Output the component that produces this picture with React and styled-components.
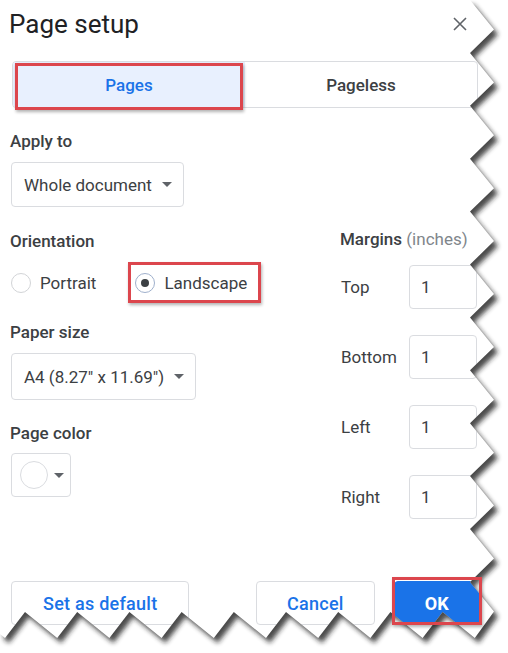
import React from 'react';
import styled, { createGlobalStyle, css } from 'styled-components';

const GlobalStyle = createGlobalStyle`
  body {
    margin: 0;
    background: #ffffff;
  }
`;

// builds the torn-paper outline along the right and bottom edges
const buildPaper = () => {
    const pts = [[0, 0]];
    for (let k = 0; k < 12; k++) {
        const y = k * 52.9;
        pts.push([470, y]);
        pts.push([494, y + 29.5]);
    }
    for (let i = 9; i >= 0; i--) {
        const px = 25 + 52.2 * i;
        if (i < 9) pts.push([px, 612]);
        pts.push([px - 20, 638]);
    }
    pts.push([0, 634]);
    return 'M' + pts.map(p => p.map(n => n.toFixed(1)).join(' ')).join('L') + 'Z';
};

const paper = buildPaper();
const outside = `M0 0H508V653H0Z ${paper}`;

const Caret = () => <CaretShape />;

const App = () => {
    return (
        <>
            <GlobalStyle />
            <Dialog>
                <Header>
                    <Title>Page setup</Title>
                    <Close>
                        <svg width="14" height="14" viewBox="0 0 14 14">
                            <path d="M1 1L13 13M13 1L1 13" stroke="#5f6368" strokeWidth="1.6" fill="none" />
                        </svg>
                    </Close>
                </Header>

                <Tabs>
                    <Tab $active>Pages</Tab>
                    <Tab>Pageless</Tab>
                </Tabs>

                <Body>
                    <Column>
                        <FieldLabel>Apply to</FieldLabel>
                        <Select $h={45}>
                            Whole document
                            <Caret />
                        </Select>

                        <FieldLabel $top={24}>Orientation</FieldLabel>
                        <RadioRow>
                            <RadioOption>
                                <Radio />
                                Portrait
                            </RadioOption>
                            <RadioOption $marked>
                                <Radio $checked />
                                Landscape
                            </RadioOption>
                        </RadioRow>

                        <FieldLabel $top={19}>Paper size</FieldLabel>
                        <Select $h={47}>
                            A4 (8.27" x 11.69")
                            <Caret />
                        </Select>

                        <FieldLabel $top={23}>Page color</FieldLabel>
                        <ColorSelect>
                            <Swatch />
                            <Caret />
                        </ColorSelect>
                    </Column>

                    <MarginsColumn>
                        <FieldLabel>Margins <Hint>(inches)</Hint></FieldLabel>
                        <MarginList>
                            {['Top', 'Bottom', 'Left', 'Right'].map(side => (
                                <MarginRow key={side}>
                                    <SideLabel>{side}</SideLabel>
                                    <NumberBox>1</NumberBox>
                                </MarginRow>
                            ))}
                        </MarginList>
                    </MarginsColumn>
                </Body>

                <Footer>
                    <Button $pad={31}>Set as default</Button>
                    <Actions>
                        <Button $pad={30}>Cancel</Button>
                        <Button $primary $marked>OK</Button>
                    </Actions>
                </Footer>

                <TornEdge width="508" height="653" viewBox="0 0 508 653">
                    <defs>
                        <filter id="tear-blur" x="-10%" y="-10%" width="120%" height="120%">
                            <feGaussianBlur stdDeviation="2.6" />
                        </filter>
                        <clipPath id="tear-outside">
                            <path d={outside} clipRule="evenodd" />
                        </clipPath>
                    </defs>
                    <path d={outside} fill="#ffffff" fillRule="evenodd" />
                    <g clipPath="url(#tear-outside)">
                        <path d={paper} transform="translate(4 5)" fill="#1a1a1a" opacity="0.8" filter="url(#tear-blur)" />
                    </g>
                </TornEdge>
            </Dialog>
        </>
    );
};

const redBox = (inset) => css`
  position: relative;

  &::after {
    content: '';
    position: absolute;
    inset: ${inset};
    border: 3px solid #dc464d;
    box-shadow: 1px 2px 3px rgba(0, 0, 0, 0.3);
    pointer-events: none;
    z-index: 2;
  }
`;

const Dialog = styled.div`
  position: relative;
  width: 508px;
  height: 653px;
  box-sizing: border-box;
  padding: 9px 30px 28px 10px;
  display: flex;
  flex-direction: column;
  background: #ffffff;
  overflow: hidden;
  font-family: Roboto, "Noto Sans", sans-serif;
  color: #3c4043;
`;

const Header = styled.div`
  display: flex;
  justify-content: space-between;
  align-items: center;
  height: 30px;
`;

const Title = styled.h1`
  margin: 0 0 0 -1px;
  font-size: 26px;
  font-weight: 400;
  line-height: 30px;
  color: #202124;
`;

const Close = styled.div`
  width: 24px;
  height: 24px;
  display: flex;
  align-items: center;
  justify-content: center;
  margin-right: 6px;
  margin-top: -1px;
`;

const Tabs = styled.div`
  margin: 22px 0 0 2px;
  height: 47px;
  box-sizing: border-box;
  border: 1px solid #dadce0;
  border-radius: 4px;
  display: grid;
  grid-template-columns: 1fr 1fr;
`;

const Tab = styled.div`
  display: flex;
  align-items: center;
  justify-content: center;
  font-size: 17px;
  font-weight: 500;
  color: ${p => (p.$active ? '#1a73e8' : '#3c4043')};
  background: ${p => (p.$active ? '#e8f0fe' : 'transparent')};
  border-radius: ${p => (p.$active ? '3px 0 0 3px' : '0 3px 3px 0')};
  ${p => p.$active && redBox('1px 2px -3px 2px')}
`;

const Body = styled.div`
  display: grid;
  grid-template-columns: 330px 1fr;
  margin-top: 23px;
`;

const Column = styled.div`
  display: flex;
  flex-direction: column;
  align-items: flex-start;
`;

const FieldLabel = styled.p`
  margin: ${p => p.$top || 0}px 0 0;
  font-size: 17px;
  font-weight: 500;
  line-height: 20px;
  color: #3c4043;
  white-space: nowrap;
`;

const Hint = styled.span`
  font-weight: 400;
  color: #80868b;
`;

const Select = styled.div`
  margin: 11px 0 0 1px;
  height: ${p => p.$h}px;
  box-sizing: border-box;
  display: inline-flex;
  align-items: center;
  gap: 10px;
  padding: 0 11px 0 12px;
  border: 1px solid #dadce0;
  border-radius: 4px;
  font-size: 17px;
  color: #3c4043;
  white-space: nowrap;
`;

const ColorSelect = styled(Select)`
  margin-top: 10px;
  height: 44px;
  gap: 6px;
  padding: 0 6px 0 8px;
`;

const CaretShape = styled.span`
  width: 0;
  height: 0;
  border-left: 5px solid transparent;
  border-right: 5px solid transparent;
  border-top: 5px solid #5f6368;
`;

const Swatch = styled.span`
  width: 28px;
  height: 28px;
  box-sizing: border-box;
  border-radius: 50%;
  border: 1px solid #dadce0;
  background: #ffffff;
`;

const RadioRow = styled.div`
  margin: 11px 0 0 1px;
  height: 41px;
  display: flex;
  align-items: stretch;
`;

const RadioOption = styled.label`
  display: flex;
  align-items: center;
  gap: 9px;
  font-size: 17px;
  color: #3c4043;
  margin-left: ${p => (p.$marked ? '39px' : '0')};
  ${p => p.$marked && redBox('0 -14px 0 -7px')}
`;

const Radio = styled.span`
  width: 20px;
  height: 20px;
  box-sizing: border-box;
  border-radius: 50%;
  border: 1.5px solid ${p => (p.$checked ? '#9fb0cc' : '#d2d4d7')};
  display: flex;
  align-items: center;
  justify-content: center;

  &::before {
    content: '';
    width: 8px;
    height: 8px;
    border-radius: 50%;
    background: ${p => (p.$checked ? '#3c4043' : 'transparent')};
  }
`;

const MarginsColumn = styled.div`
  display: flex;
  flex-direction: column;
  padding-top: 98px;
`;

const MarginList = styled.div`
  display: flex;
  flex-direction: column;
  gap: 26px;
  margin-top: 16px;
`;

const MarginRow = styled.div`
  display: grid;
  grid-template-columns: 69px 68px;
  align-items: center;
  height: 44px;
`;

const SideLabel = styled.span`
  font-size: 17px;
  color: #3c4043;
  padding-left: 1px;
`;

const NumberBox = styled.div`
  height: 44px;
  box-sizing: border-box;
  border: 1px solid #dadce0;
  border-radius: 4px;
  padding-left: 11px;
  display: flex;
  align-items: center;
  font-size: 17px;
  color: #3c4043;
`;

const Footer = styled.div`
  margin: auto -2px 0 1px;
  display: flex;
  justify-content: space-between;
  align-items: center;
`;

const Actions = styled.div`
  display: flex;
  gap: 19px;
`;

const Button = styled.button`
  height: 44px;
  box-sizing: border-box;
  padding: 0 ${p => p.$pad || 30}px;
  border: 1px solid ${p => (p.$primary ? '#1a73e8' : '#dadce0')};
  border-radius: 4px;
  background: ${p => (p.$primary ? '#1a73e8' : '#ffffff')};
  color: ${p => (p.$primary ? '#ffffff' : '#1a73e8')};
  font-family: Roboto, "Noto Sans", sans-serif;
  font-size: 18px;
  font-weight: ${p => (p.$primary ? 700 : 500)};
  letter-spacing: 0.25px;
  ${p => p.$marked && redBox('-5px -3px -1px -3px')}
`;

const TornEdge = styled.svg`
  position: absolute;
  top: 0;
  left: 0;
  pointer-events: none;
  z-index: 1;
`;

export default App;
